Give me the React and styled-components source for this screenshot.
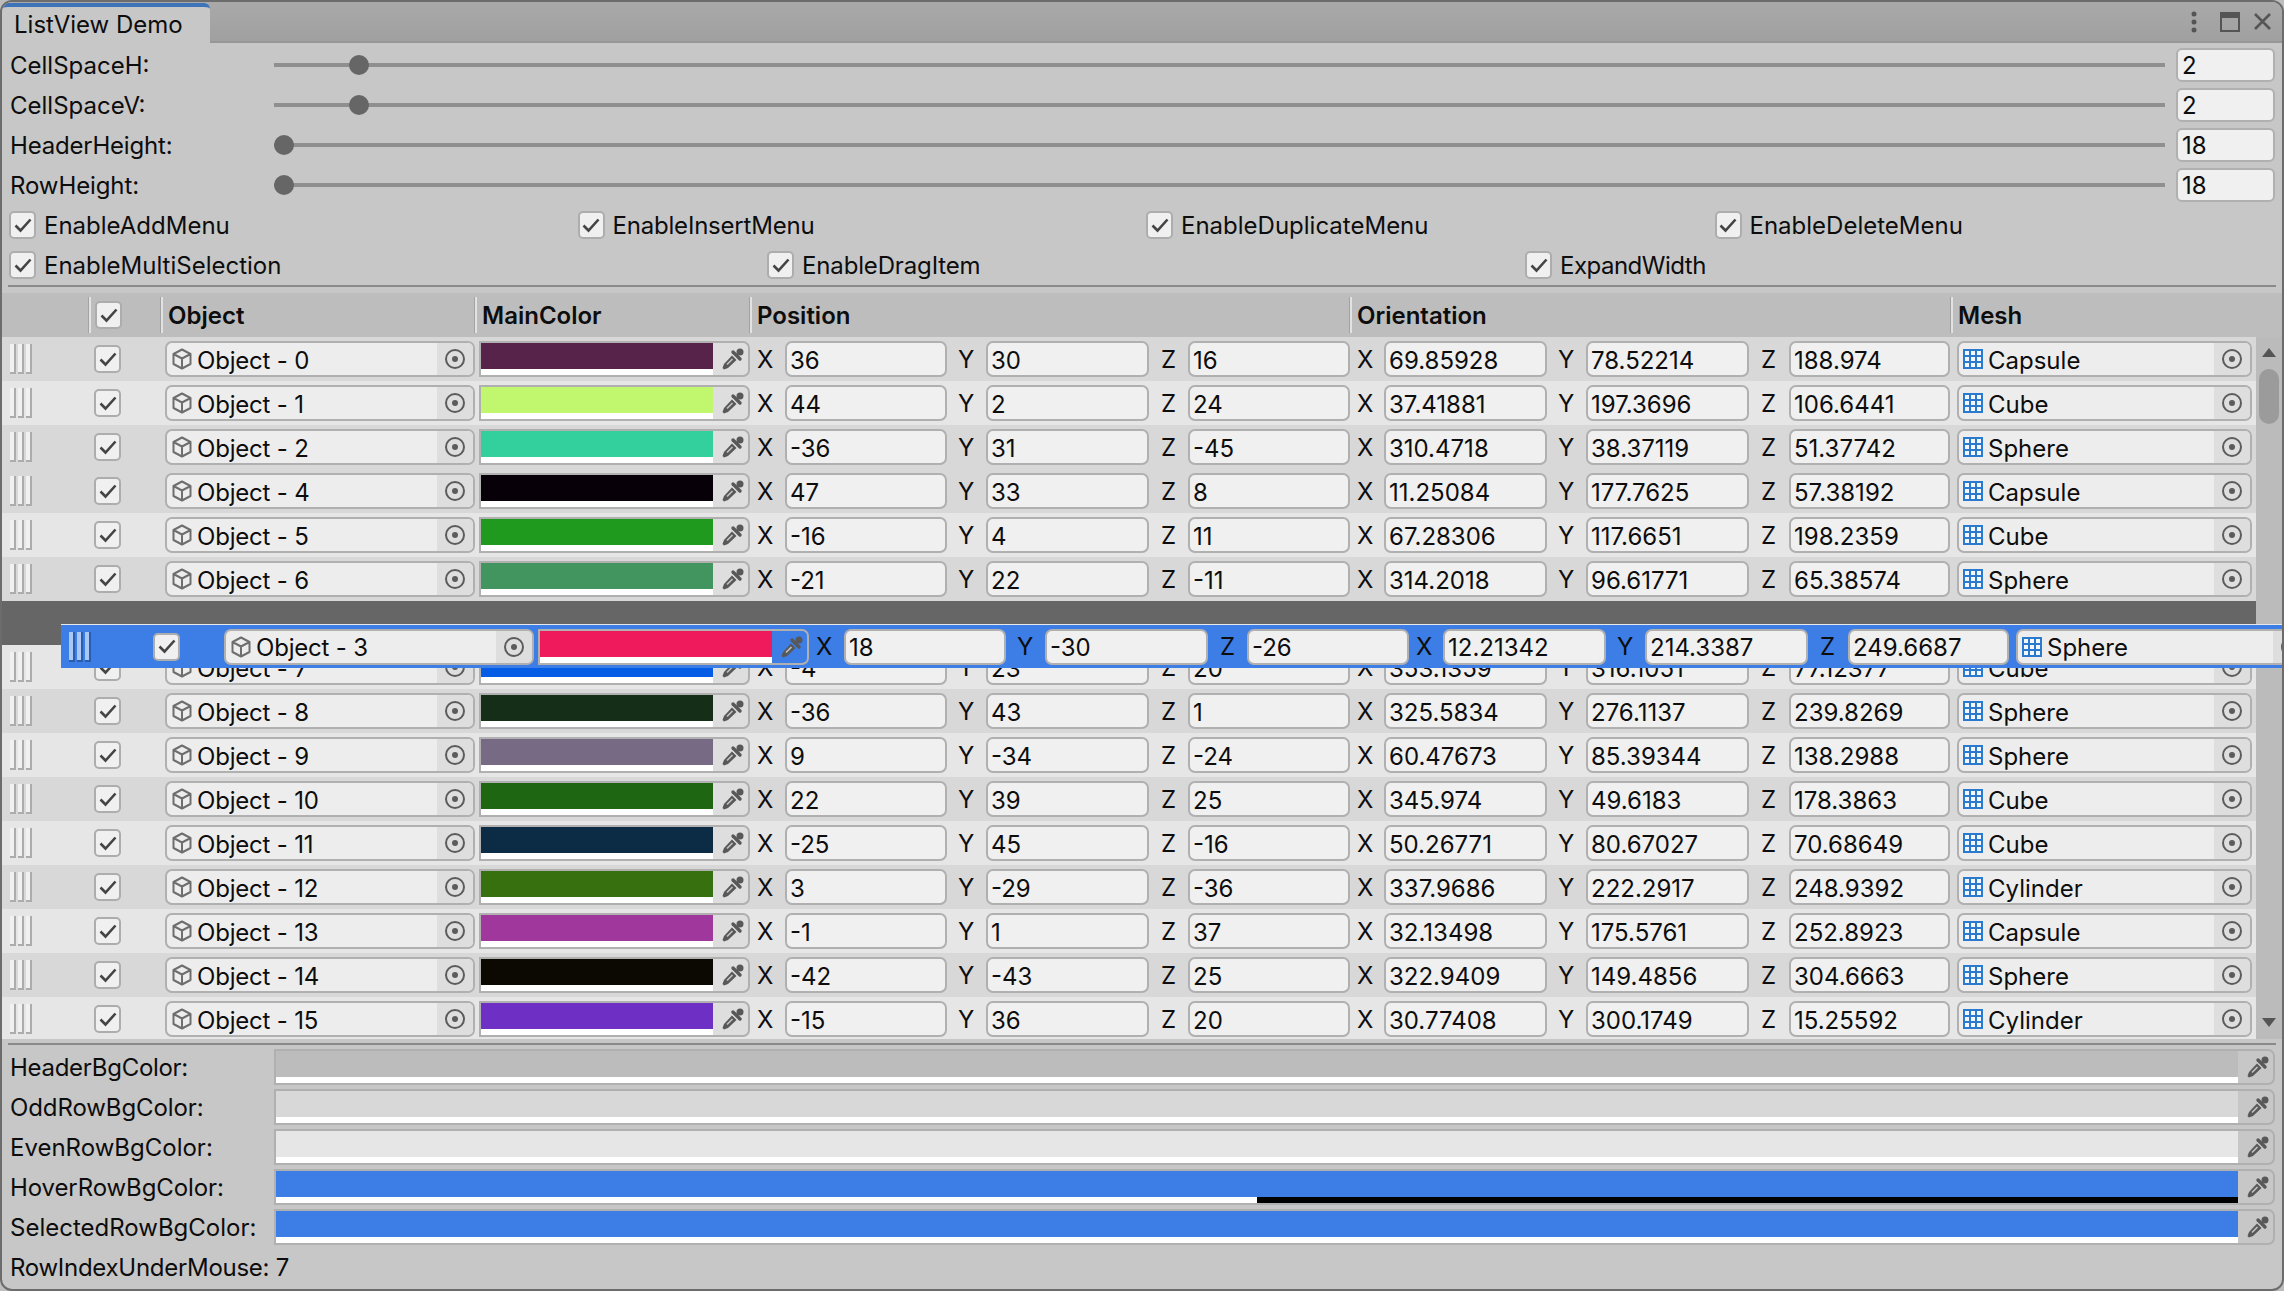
import React from "react";
import styled, { createGlobalStyle } from "styled-components";

const GlobalStyle = createGlobalStyle`
  html, body {
    margin: 0;
    padding: 0;
    background: #bdbdbd;
  }
  * {
    box-sizing: border-box;
  }
`;

const BLUE = "#3d7de6";

const sliders = [
  { label: "CellSpaceH:", value: 2 },
  { label: "CellSpaceV:", value: 2 },
  { label: "HeaderHeight:", value: 18, pos: 0, track: -0.2 },
  { label: "RowHeight:", value: 18, pos: 0, track: -0.1 },
];

const checksTop = [
  { label: "EnableAddMenu" },
  { label: "EnableInsertMenu", track: -0.2 },
  { label: "EnableDuplicateMenu" },
  { label: "EnableDeleteMenu" },
];
const checksBottom = [
  { label: "EnableMultiSelection" },
  { label: "EnableDragItem", track: -0.15 },
  { label: "ExpandWidth", track: -0.5 },
];

const rowsBefore = [
  [0, "#57234b", 36, 30, 16, "69.85928", "78.52214", "188.974", "Capsule"],
  [1, "#c1f76e", 44, 2, 24, "37.41881", "197.3696", "106.6441", "Cube"],
  [2, "#33cf9d", -36, 31, -45, "310.4718", "38.37119", "51.37742", "Sphere"],
  [4, "#080008", 47, 33, 8, "11.25084", "177.7625", "57.38192", "Capsule"],
  [5, "#1f9a1f", -16, 4, 11, "67.28306", "117.6651", "198.2359", "Cube"],
  [6, "#42955e", -21, 22, -11, "314.2018", "96.61771", "65.38574", "Sphere"],
];

const rowsAfter = [
  [7, "#055de6", -4, 23, 20, "353.1359", "316.1051", "77.12377", "Cube"],
  [8, "#142e17", -36, 43, 1, "325.5834", "276.1137", "239.8269", "Sphere"],
  [9, "#776a85", 9, -34, -24, "60.47673", "85.39344", "138.2988", "Sphere"],
  [10, "#1e6611", 22, 39, 25, "345.974", "49.6183", "178.3863", "Cube"],
  [11, "#0c2b44", -25, 45, -16, "50.26771", "80.67027", "70.68649", "Cube"],
  [12, "#37700f", 3, -29, -36, "337.9686", "222.2917", "248.9392", "Cylinder"],
  [13, "#a0379c", -1, 1, 37, "32.13498", "175.5761", "252.8923", "Capsule"],
  [14, "#0c0802", -42, -43, 25, "322.9409", "149.4856", "304.6663", "Sphere"],
  [15, "#6e2fc4", -15, 36, 20, "30.77408", "300.1749", "15.25592", "Cylinder"],
];

const draggedRow = [3, "#ef1a5c", 18, -30, -26, "12.21342", "214.3387", "249.6687", "Sphere"];

const colorRows = [
  { label: "HeaderBgColor:", color: "#bcbcbc", alpha: 100, track: -0.3 },
  { label: "OddRowBgColor:", color: "#d8d8d8", alpha: 100, track: -0.1 },
  { label: "EvenRowBgColor:", color: "#e6e6e6", alpha: 100 },
  { label: "HoverRowBgColor:", color: BLUE, alpha: 50, track: -0.1 },
  { label: "SelectedRowBgColor:", color: BLUE, alpha: 100 },
];

const Window = styled.div`
  width: 100%;
  height: 100vh;
  display: flex;
  flex-direction: column;
  overflow: hidden;
  background: #c7c7c7;
  border: 2px solid #6c6c6c;
  border-radius: 12px;
  font-family: "Inter", "Liberation Sans", sans-serif;
  font-size: 24px;
  color: #0d0d0d;
`;

const TabBar = styled.div`
  height: 41px;
  flex: none;
  display: flex;
  align-items: flex-end;
  justify-content: space-between;
  background: linear-gradient(#a9a9a9, #a0a0a0);
  border-bottom: 2px solid #979797;
`;

const Tab = styled.div`
  width: 208px;
  height: 40px;
  margin-bottom: -2px;
  padding: 0 0 2px 12px;
  display: flex;
  align-items: center;
  background: #c7c7c7;
  border-top: 4px solid #3d73b8;
  border-radius: 6px 6px 0 0;
`;

const WindowTools = styled.div`
  display: flex;
  align-items: center;
  gap: 14px;
  height: 39px;
  padding: 0 11px 0 0;
  color: #555;

  svg:first-child {
    margin-right: 9px;
  }
`;

const TopPanel = styled.div`
  flex: none;
  padding: 2px 7px 0 8px;
`;

const SliderRow = styled.div`
  height: 40px;
  display: grid;
  grid-template-columns: 264px 1fr 99px;
  align-items: center;
`;

const FieldLabel = styled.div`
  letter-spacing: ${(p) => p.$track || 0}px;
`;

const SliderTrack = styled.div`
  position: relative;
  height: 4px;
  margin-right: 11px;
  background: #8f8f8f;
`;

const SliderThumb = styled.div`
  position: absolute;
  top: -8px;
  width: 20px;
  height: 20px;
  border-radius: 50%;
  background: #666;
`;

const SmallNumber = styled.div`
  height: 34px;
  padding-left: 4px;
  display: flex;
  align-items: center;
  background: #f0f0f0;
  border: 2px solid #b0b0b0;
  border-radius: 6px;
`;

const CheckRow = styled.div`
  height: 40px;
  margin: 0 -8px 0 -1px;
  display: grid;
  grid-template-columns: repeat(${(p) => p.$columns}, 1fr);
  align-items: center;
`;

const CheckItem = styled.div`
  display: flex;
  align-items: center;
  gap: 8px;
  letter-spacing: ${(p) => p.$track || 0}px;
`;

const CheckBox = styled.div`
  width: 27px;
  height: 28px;
  flex: none;
  display: flex;
  align-items: center;
  justify-content: center;
  background: #f0f0f0;
  border: 2px solid #adadad;
  border-radius: 5px;
`;

const Divider = styled.div`
  height: 2px;
  flex: none;
  margin: ${(p) => p.$margin};
  background: #8a8a8a;
`;

const Table = styled.div`
  position: relative;
  flex: none;
  margin-top: 6px;
`;

const HeaderRow = styled.div`
  height: 44px;
  padding-left: 87px;
  display: flex;
  align-items: center;
  background: #bdbdbd;
  font-weight: 600;
`;

const HeaderCell = styled.div`
  width: ${(p) => p.$w}px;
  height: 36px;
  padding-left: ${(p) => p.$pad || 5}px;
  display: flex;
  align-items: center;
  border-left: 2px solid #e2e2e2;
  box-shadow: -1px 0 0 #a3a3a3;
`;

const TableBody = styled.div`
  height: 702px;
  display: flex;
`;

const RowList = styled.div`
  width: 2254px;
  overflow: hidden;
`;

const Row = styled.div`
  height: 44px;
  display: flex;
  align-items: center;
  background: ${(p) => p.$bg};
`;

const DropGap = styled.div`
  height: 44px;
  background: #666;
`;

const DragRow = styled(Row)`
  position: absolute;
  left: 59px;
  top: 331px;
  width: 2260px;
  border-top: 1px solid #e8e8e8;
`;

const Handle = styled.div`
  width: 92px;
  flex: none;
  padding-left: 8px;
  display: flex;
  gap: 2px;
`;

const HandleBar = styled.div`
  width: 6px;
  height: 30px;
  background: ${(p) => (p.$dragged ? "#a9c8f5" : "#f1f1f1")};
  border-right: 2px solid ${(p) => (p.$dragged ? "#2a5cb0" : "#acacac")};
  border-bottom: 2px solid ${(p) => (p.$dragged ? "#2a5cb0" : "#acacac")};
`;

const CheckCell = styled.div`
  width: 71px;
  flex: none;
`;

const PickerField = styled.div`
  width: ${(p) => p.$w}px;
  margin-left: ${(p) => p.$left || 0}px;
  height: 36px;
  flex: none;
  display: flex;
  align-items: center;
  overflow: hidden;
  background: #ededed;
  border: 2px solid #b0b0b0;
  border-radius: 7px;
`;

const PickerIcon = styled.div`
  margin-left: ${(p) => p.$left}px;
  margin-right: ${(p) => p.$gap}px;
  display: flex;
`;

const PickerText = styled.div`
  flex: 1;
  padding-top: 2px;
  white-space: nowrap;
  letter-spacing: ${(p) => p.$track || 0}px;
`;

const PickerButton = styled.div`
  width: 36px;
  height: 100%;
  flex: none;
  display: flex;
  align-items: center;
  justify-content: center;
  background: #dedede;
`;

const ColorField = styled.div`
  ${(p) => (p.$w ? `width: ${p.$w}px;` : "")}
  margin-left: ${(p) => p.$left || 0}px;
  height: 36px;
  flex: none;
  display: flex;
  overflow: hidden;
  background: ${(p) => (p.$flat ? "transparent" : "#dedede")};
  border: 2px solid #b0b0b0;
  border-radius: 0 7px 7px 0;
`;

const Swatch = styled.div`
  flex: 1;
  display: flex;
  flex-direction: column;
`;

const SwatchColor = styled.div`
  height: 26px;
  background: ${(p) => p.$color};
`;

const SwatchAlpha = styled.div`
  height: 6px;
  background: #000;
`;

const AlphaFill = styled.div`
  height: 100%;
  background: #fff;
`;

const DropperCell = styled.div`
  width: 35px;
  flex: none;
  padding-left: 4px;
  display: flex;
  align-items: center;
  justify-content: center;
`;

const AxisLabel = styled.div`
  width: ${(p) => p.$w}px;
  padding-left: ${(p) => p.$pad}px;
  flex: none;
`;

const NumberBox = styled.div`
  width: ${(p) => p.$w}px;
  height: 36px;
  flex: none;
  padding: 2px 0 0 3px;
  display: flex;
  align-items: center;
  background: #f0f0f0;
  border: 2px solid #b0b0b0;
  border-radius: 7px;
`;

const ScrollBar = styled.div`
  width: 26px;
  padding: 11px 2px 12px;
  display: flex;
  flex-direction: column;
  align-items: center;
  background: #bbb;
`;

const ScrollArrow = styled.div`
  width: 0;
  height: 0;
  border-left: 7px solid transparent;
  border-right: 7px solid transparent;
  ${(p) => (p.$down ? "border-top: 9px solid #555; margin-top: auto;" : "border-bottom: 9px solid #555;")}
`;

const ScrollThumb = styled.div`
  width: 20px;
  height: 55px;
  margin-top: 12px;
  background: #9b9b9b;
  border-radius: 10px;
`;

const BottomPanel = styled.div`
  flex: 1;
  padding: 2px 7px 0 8px;
`;

const ColorRow = styled.div`
  height: 40px;
  display: grid;
  grid-template-columns: 264px 1fr;
  align-items: center;
`;

const StatusRow = styled.div`
  height: 40px;
  display: flex;
  align-items: center;
  letter-spacing: -0.28px;
`;

const CheckMark = () => (
  <svg width="18" height="15" viewBox="0 0 18 15">
    <path d="M1.5 7.5 L6.5 12.5 L16.5 1.5" fill="none" stroke="#444" strokeWidth="2.6" />
  </svg>
);

const Check = () => (
  <CheckBox>
    <CheckMark />
  </CheckBox>
);

const CubeIcon = () => (
  <svg width="20" height="22" viewBox="0 0 20 22">
    <path
      d="M10 1.5 L18.5 6 V16 L10 20.5 L1.5 16 V6 Z M1.5 6 L10 10.5 L18.5 6 M10 10.5 V20.5"
      fill="none"
      stroke="#6e6e6e"
      strokeWidth="2"
      strokeLinejoin="round"
    />
  </svg>
);

const MeshIcon = () => (
  <svg width="20" height="20" viewBox="0 0 20 20">
    <rect x="0" y="0" width="20" height="20" fill="#f4f8fc" />
    <path
      d="M1 0 V20 M7 0 V20 M13 0 V20 M19 0 V20 M0 1 H20 M0 7 H20 M0 13 H20 M0 19 H20"
      fill="none"
      stroke="#2a7ad0"
      strokeWidth="2"
    />
  </svg>
);

const TargetIcon = () => (
  <svg width="20" height="20" viewBox="0 0 20 20">
    <circle cx="10" cy="10" r="9" fill="none" stroke="#5c5c5c" strokeWidth="2" />
    <circle cx="10" cy="10" r="3" fill="#5c5c5c" />
  </svg>
);

const DropperIcon = () => (
  <svg width="22" height="22" viewBox="0 0 22 22">
    <circle cx="18" cy="4" r="3.5" fill="#585858" />
    <path d="M11 4 L18 11" stroke="#585858" strokeWidth="3.4" strokeLinecap="round" />
    <path d="M10 7.5 L14.5 12 L6 20 L2 21.5 L0.5 20 L2 16 Z" fill="#585858" />
    <path d="M10.5 11 L5 16.5" stroke="#c4c4c4" strokeWidth="1.6" />
  </svg>
);

const KebabIcon = () => (
  <svg width="6" height="22" viewBox="0 0 6 22">
    <circle cx="3" cy="3" r="2.5" fill="currentColor" />
    <circle cx="3" cy="11" r="2.5" fill="currentColor" />
    <circle cx="3" cy="19" r="2.5" fill="currentColor" />
  </svg>
);

const MaximizeIcon = () => (
  <svg width="20" height="20" viewBox="0 0 20 20">
    <path d="M1 1 H19 V19 H1 Z" fill="none" stroke="currentColor" strokeWidth="2" />
    <rect x="0" y="0" width="20" height="6" fill="currentColor" />
  </svg>
);

const CloseIcon = () => (
  <svg width="17" height="17" viewBox="0 0 17 17">
    <path d="M1 1 L16 16 M16 1 L1 16" fill="none" stroke="currentColor" strokeWidth="2.6" />
  </svg>
);

const Picker = ({ w, left, iconLeft, iconGap, track, icon, text }) => (
  <PickerField $w={w} $left={left}>
    <PickerIcon $left={iconLeft} $gap={iconGap}>{icon}</PickerIcon>
    <PickerText $track={track}>{text}</PickerText>
    <PickerButton>
      <TargetIcon />
    </PickerButton>
  </PickerField>
);

const Color = ({ color, alpha = 100, w, left, flat }) => (
  <ColorField $w={w} $left={left} $flat={flat}>
    <Swatch>
      <SwatchColor $color={color} />
      <SwatchAlpha>
        <AlphaFill style={{ width: `${alpha}%` }} />
      </SwatchAlpha>
    </Swatch>
    <DropperCell>
      <DropperIcon />
    </DropperCell>
  </ColorField>
);

const Axis = ({ name, w, pad, inputW, value }) => (
  <>
    <AxisLabel $w={w} $pad={pad}>{name}</AxisLabel>
    <NumberBox $w={inputW}>{value}</NumberBox>
  </>
);

const RowCells = ({ data, dragged }) => {
  const [id, color, px, py, pz, ox, oy, oz, mesh] = data;
  return (
    <>
      <Handle>
        <HandleBar $dragged={dragged} />
        <HandleBar $dragged={dragged} />
        <HandleBar $dragged={dragged} />
      </Handle>
      <CheckCell>
        <Check />
      </CheckCell>
      <Picker w={310} iconLeft={5} iconGap={5} track={-0.2} icon={<CubeIcon />} text={`Object - ${id}`} />
      <Color color={color} w={271} left={4} flat={dragged} />
      <Axis name="X" w={35} pad={7} inputW={162} value={px} />
      <Axis name="Y" w={39} pad={11} inputW={163} value={py} />
      <Axis name="Z" w={39} pad={12} inputW={162} value={pz} />
      <Axis name="X" w={34} pad={7} inputW={163} value={ox} />
      <Axis name="Y" w={39} pad={11} inputW={163} value={oy} />
      <Axis name="Z" w={40} pad={12} inputW={161} value={oz} />
      <Picker w={295} left={7} iconLeft={4} iconGap={5} icon={<MeshIcon />} text={mesh} />
    </>
  );
};

const DataRow = ({ data }) => (
  <Row $bg={data[0] % 2 === 0 ? "#d8d8d8" : "#e6e6e6"}>
    <RowCells data={data} />
  </Row>
);

export default function App() {
  return (
    <>
      <GlobalStyle />
      <Window>
        <TabBar>
          <Tab>ListView Demo</Tab>
          <WindowTools>
            <KebabIcon />
            <MaximizeIcon />
            <CloseIcon />
          </WindowTools>
        </TabBar>

        <TopPanel>
          {sliders.map((s) => (
            <SliderRow key={s.label}>
              <FieldLabel $track={s.track}>{s.label}</FieldLabel>
              <SliderTrack>
                <SliderThumb style={{ left: `${((s.pos ?? s.value) / 50) * 99}%` }} />
              </SliderTrack>
              <SmallNumber>{s.value}</SmallNumber>
            </SliderRow>
          ))}
          <CheckRow $columns={4}>
            {checksTop.map((c) => (
              <CheckItem key={c.label} $track={c.track}>
                <Check />
                {c.label}
              </CheckItem>
            ))}
          </CheckRow>
          <CheckRow $columns={3}>
            {checksBottom.map((c) => (
              <CheckItem key={c.label} $track={c.track}>
                <Check />
                {c.label}
              </CheckItem>
            ))}
          </CheckRow>
        </TopPanel>

        <Divider $margin="0 6px 0 6px" />

        <Table>
          <HeaderRow>
            <HeaderCell $w={72} $pad={4}>
              <Check />
            </HeaderCell>
            <HeaderCell $w={314}>Object</HeaderCell>
            <HeaderCell $w={275}>MainColor</HeaderCell>
            <HeaderCell $w={600}>Position</HeaderCell>
            <HeaderCell $w={601}>Orientation</HeaderCell>
            <HeaderCell $w={331}>Mesh</HeaderCell>
          </HeaderRow>
          <TableBody>
            <RowList>
              {rowsBefore.map((r) => (
                <DataRow key={r[0]} data={r} />
              ))}
              <DropGap />
              {rowsAfter.map((r) => (
                <DataRow key={r[0]} data={r} />
              ))}
            </RowList>
            <ScrollBar>
              <ScrollArrow />
              <ScrollThumb />
              <ScrollArrow $down />
            </ScrollBar>
          </TableBody>
          <DragRow $bg={BLUE}>
            <RowCells data={draggedRow} dragged />
          </DragRow>
        </Table>

        <Divider $margin="4px 6px 0 6px" />

        <BottomPanel>
          {colorRows.map((c) => (
            <ColorRow key={c.label}>
              <FieldLabel $track={c.track}>{c.label}</FieldLabel>
              <Color color={c.color} alpha={c.alpha} flat />
            </ColorRow>
          ))}
          <StatusRow>RowIndexUnderMouse: 7</StatusRow>
        </BottomPanel>
      </Window>
    </>
  );
}
